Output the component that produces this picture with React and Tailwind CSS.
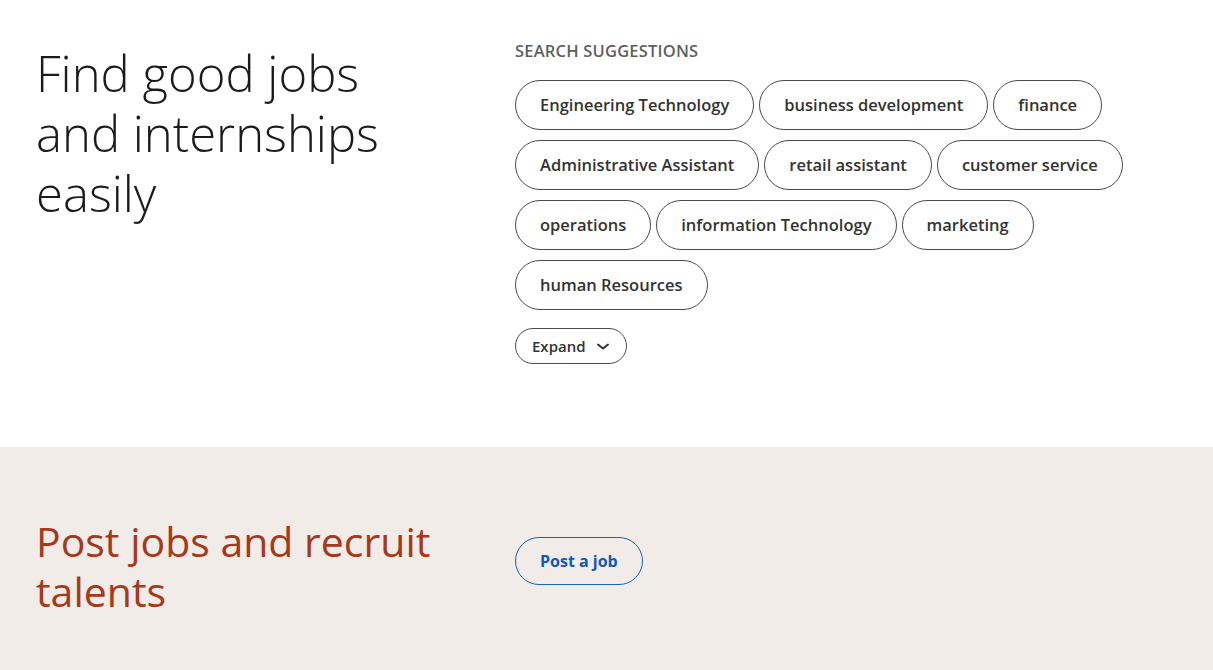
import React from 'react';

const suggestions = [
  'Engineering Technology',
  'business development',
  'finance',
  'Administrative Assistant',
  'retail assistant',
  'customer service',
  'operations',
  'information Technology',
  'marketing',
  'human Resources',
];

const font = { fontFamily: '"Open Sans", "Noto Sans", sans-serif' };

const App = () => {
  return (
    <div className="min-h-screen bg-white" style={font}>
      {/* search suggestions */}
      <section className="flex px-9 pt-10 pb-[83px]">
        <div className="w-[479px] shrink-0">
          <h1 className="mt-[3px] w-[380px] text-[49px] leading-[60px] font-light text-[#1b1b1b]">
            Find good jobs and internships easily
          </h1>
        </div>
        <div className="flex-1">
          <h2 className="mt-[1px] text-[16.5px] leading-5 font-semibold uppercase text-[#5f5f5f] tracking-[0.2px]">
            Search suggestions
          </h2>
          <div className="mt-[19px] flex flex-wrap gap-x-[5px] gap-y-[10px] w-[640px]">
            {suggestions.map((s) => (
              <button
                key={s}
                className="h-[50px] px-6 rounded-full border border-[#4a4a4a] text-[16.5px] font-semibold text-[#333] whitespace-nowrap"
              >
                {s}
              </button>
            ))}
          </div>
          <button className="mt-[18px] h-9 pl-4 pr-[17px] rounded-full border border-[#4a4a4a] flex items-center gap-[11px] text-[15px] font-semibold text-[#333]">
            Expand
            <svg width="12" height="7" viewBox="0 0 12 7" fill="none">
              <path d="M1 1.5l5 4 5-4" stroke="#333" strokeWidth="2" strokeLinecap="round" strokeLinejoin="round" />
            </svg>
          </button>
        </div>
      </section>

      {/* recruit */}
      <section className="flex px-9 pt-[69px] pb-14 bg-[#f1ece7]">
        <div className="w-[479px] shrink-0">
          <h2 className="w-[420px] text-[41px] leading-[50px] text-[#a6391c]">
            Post jobs and recruit talents
          </h2>
        </div>
        <div className="flex-1 pt-[21px]">
          <button className="h-12 px-6 rounded-full border border-[#1a62b8] text-[16px] font-bold text-[#115ab0]">
            Post a job
          </button>
        </div>
      </section>
    </div>
  );
};

export default App;
